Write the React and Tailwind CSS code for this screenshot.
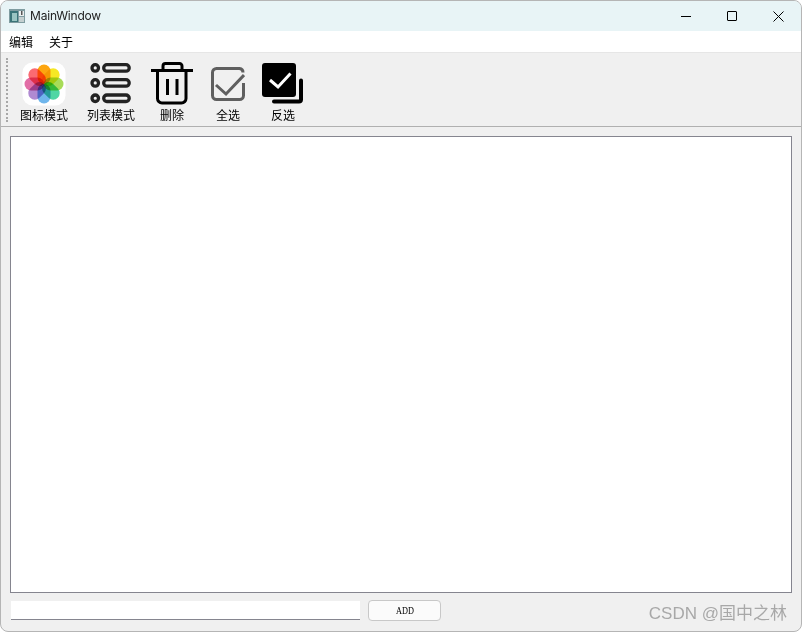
import React from "react";

const CN = "font-['Noto_Sans_CJK_SC','Noto_Sans',sans-serif]";

const AppIcon = () => (
  <svg width="16" height="14" viewBox="0 0 16 14">
    <rect x="0" y="0" width="16" height="14" fill="#7f9ca0" />
    <rect x="1" y="2" width="8" height="11" fill="#3a7478" />
    <rect x="3" y="4" width="5" height="8" fill="#9ac5c2" />
    <rect x="10" y="2" width="5" height="5" fill="#e8eeee" />
    <rect x="10" y="8" width="5" height="5" fill="#c4d0d0" />
    <rect x="12" y="2" width="1.500" height="4" fill="#555" />
  </svg>
);

const Petals = () => {
  const petals = [
    ["#fda50f", 0],
    ["#f6e824", 45],
    ["#a8dc58", 90],
    ["#4fd6a4", 135],
    ["#6fb6ec", 180],
    ["#b08ad2", 225],
    ["#e26ea6", 270],
    ["#fb6a72", 315],
  ];
  return (
    <svg width="44" height="44" viewBox="0 0 44 44">
      <rect x="0.500" y="0.500" width="43" height="43" rx="10" fill="#fff" />
      {petals.map(([c, a]) => (
        <rect
          key={a}
          x="15.500"
          y="2.500"
          width="13"
          height="19.500"
          rx="6.500"
          fill={c}
          transform={`rotate(${a} 22 22)`}
          style={{ mixBlendMode: "multiply" }}
        />
      ))}
    </svg>
  );
};

const ListIcon = () => (
  <svg width="42" height="42" viewBox="0 0 42 42" fill="none" stroke="#222" strokeWidth="3.300">
    <rect x="2" y="1.700" width="6.500" height="6.500" rx="3.200" />
    <rect x="13.700" y="1.700" width="25.500" height="6.500" rx="3.200" />
    <rect x="2" y="16.700" width="6.500" height="6.500" rx="3.200" />
    <rect x="13.700" y="16.700" width="25.500" height="6.500" rx="3.200" />
    <rect x="2" y="32" width="6.500" height="6.500" rx="3.200" />
    <rect x="13.700" y="32" width="25.500" height="6.500" rx="3.200" />
  </svg>
);

const TrashIcon = () => (
  <svg width="42" height="43" viewBox="0 0 42 43" fill="none" stroke="#000" strokeWidth="3">
    <path d="M0 8.500H42" />
    <path d="M12 8V4A2.500 2.500 0 0 1 14.500 1.500H28.500A2.500 2.500 0 0 1 31 4V8" />
    <path d="M6.500 9V36.500A4.500 4.500 0 0 0 11 41H30.500A4.500 4.500 0 0 0 35 36.500V9" />
    <path d="M16.500 17V33M26 17V33" />
  </svg>
);

const CheckAllIcon = () => (
  <svg width="34" height="34" viewBox="0 0 34 34" fill="none" stroke="#5f5f5f" strokeWidth="3">
    <path d="M32 5.500A4 4 0 0 0 28.500 1.500H5.500A4 4 0 0 0 1.500 5.500V28.500A4 4 0 0 0 5.500 32.500H28.500A4 4 0 0 0 32.500 28.500V16" />
    <path d="M5 18L15 27L33 8" />
  </svg>
);

const InvertIcon = () => (
  <svg width="42" height="41" viewBox="0 0 42 41" fill="none">
    <rect x="0" y="0" width="34" height="34" rx="3" fill="#000" />
    <path d="M8 17L16 24L28.500 10.500" stroke="#fff" strokeWidth="3" />
    <path d="M39 17.500V36.500A2 2 0 0 1 37 38.500H12" stroke="#000" strokeWidth="4" strokeLinecap="round" />
  </svg>
);

const ToolButton = ({ width, label, children }) => (
  <div className="flex flex-col items-center h-full" style={{ width }}>
    <div className="h-[47px] flex items-center justify-center">{children}</div>
    <span className={`${CN} text-[12px] leading-[16px] text-black whitespace-nowrap`}>{label}</span>
  </div>
);

const App = () => {
  return (
    <div className="w-[802px] h-[632px] relative overflow-hidden bg-white">
      <div className="h-full flex flex-col rounded-[8px] border border-[#b5b5b5] overflow-hidden bg-[#f0f0f0] font-['Liberation_Sans',sans-serif]">
        {/* title bar */}
        <div className="h-[30px] shrink-0 bg-[#e8f4f6] flex items-center justify-between pl-[8px]">
          <div className="flex items-center gap-[5px]">
            <AppIcon />
            <span className="font-['Inter',sans-serif] text-[12px] tracking-[-0.2px] text-[#222]">MainWindow</span>
          </div>
          <div className="flex items-center h-full">
            <div className="w-[46px] h-full flex items-center justify-center">
              <div className="w-[10px] h-px bg-black" />
            </div>
            <div className="w-[46px] h-full flex items-center justify-center">
              <div className="w-[10px] h-[10px] border border-black rounded-[1px]" />
            </div>
            <div className="w-[46px] h-full flex items-center justify-center">
              <svg width="11" height="11" viewBox="0 0 11 11" stroke="#000" strokeWidth="1">
                <path d="M0.500 0.500L10.500 10.500M10.500 0.500L0.500 10.500" />
              </svg>
            </div>
          </div>
        </div>
        {/* menu bar */}
        <div className={`${CN} h-[21px] shrink-0 bg-white flex items-center gap-[16px] pl-[8px] text-[12px] text-black`}>
          <span>编辑</span>
          <span>关于</span>
        </div>
        {/* toolbar */}
        <div className="h-[75px] shrink-0 border-t border-[#e6e6e6] border-b border-b-[#b0b0b0] flex items-stretch pt-[7px] pl-[5px]">
          <div className="w-px h-[64px] mt-[-2px] mr-[5px] border-l-2 border-dotted border-[#a8a8a8]" />
          <div className="flex">
            <ToolButton width="62px" label="图标模式"><Petals /></ToolButton>
            <ToolButton width="72px" label="列表模式"><ListIcon /></ToolButton>
            <ToolButton width="50px" label="删除"><TrashIcon /></ToolButton>
            <ToolButton width="62px" label="全选"><CheckAllIcon /></ToolButton>
            <ToolButton width="48px" label="反选"><InvertIcon /></ToolButton>
          </div>
        </div>
        {/* central area */}
        <div className="flex-1 min-h-0 flex flex-col pt-[9px] pl-[9px] pr-[9px]">
          <div className="h-[457px] shrink-0 bg-white border border-[#85858f]" />
          <div className="flex items-center mt-[7px] pl-px">
            <div className="w-[349px] h-[19px] bg-white border-b border-[#85858f]" />
            <button className="ml-[8px] w-[73px] h-[21px] bg-[#fbfbfb] border border-[#c8c8c8] rounded-[4px] font-['Liberation_Serif',serif] text-[11px] leading-none text-black">
              <span className="inline-block scale-x-75">ADD</span>
            </button>
          </div>
        </div>
      </div>
      {/* CSDN watermark over the window */}
      <span className="absolute right-[15px] top-[603px] font-['Liberation_Sans','Noto_Sans_CJK_SC',sans-serif] text-[17px] leading-[22px] text-[#a8a8a8]">
        CSDN @国中之林
      </span>
    </div>
  );
};

export default App;
